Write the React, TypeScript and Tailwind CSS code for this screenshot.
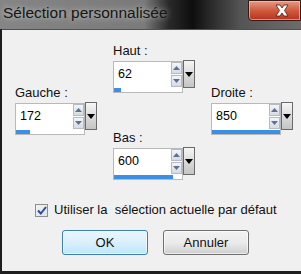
import React from "react";

const font = { fontFamily: '"Liberation Sans", Arial, sans-serif' };

type Field = { label: string; value: string; bar: number };

function SpinField({ label, value, bar }: Field) {
    return (
        <div className="flex flex-col">
            <div className="h-[17px] text-[13px] leading-[14px] text-[#111]">{label}</div>
            <div className="flex items-start">
                {/* value box */}
                <div className="w-[70px] h-[32px] border border-[#b9b9b9] bg-white flex flex-col">
                    <div className="flex h-[26px]">
                        <div className="flex-1 pl-[4px] pt-[5px] text-[12.5px] leading-[14px] text-black">{value}</div>
                        <div className="w-[11px] flex flex-col gap-[1px]">
                            <div className="h-[12px] border border-[#b5bac4] bg-gradient-to-b from-[#f3f5f8] to-[#d6dbe3] flex items-center justify-center">
                                <svg width="7" height="4" viewBox="0 0 7 4">
                                    <path d="M0 4 L3.5 0 L7 4 Z" fill="#5e7290" />
                                </svg>
                            </div>
                            <div className="h-[12px] border border-[#b5bac4] bg-gradient-to-b from-[#f3f5f8] to-[#d6dbe3] flex items-center justify-center">
                                <svg width="7" height="4" viewBox="0 0 7 4">
                                    <path d="M0 0 L7 0 L3.5 4 Z" fill="#5e7290" />
                                </svg>
                            </div>
                        </div>
                    </div>
                    <div className="mt-auto h-[4px] flex">
                        <div className="h-full bg-[#3c8fe2]" style={{ width: bar }} />
                    </div>
                </div>
                {/* dropdown button */}
                <div className="w-[12px] h-[28px] -mt-[1px] border border-[#6a6a6a] bg-gradient-to-b from-[#f6f6f6] via-[#dcdcdc] to-[#c4c4c4] flex items-center justify-center">
                    <svg width="8" height="5" viewBox="0 0 8 5">
                        <path d="M0 0 L8 0 L4 5 Z" fill="#000" />
                    </svg>
                </div>
            </div>
        </div>
    );
}

export default function App() {
    return (
        <div className="w-[301px] h-[274px] overflow-hidden bg-[#1e1e1e] flex flex-col" style={font}>
            {/* TITLE BAR */}
            <div className="h-[29px] flex items-start bg-[linear-gradient(90deg,#858585_0%,#7a7a7a_48%,#2a2a2a_56%,#0e0e0e_64%,#2a2a2a_70%,#555555_80%,#6c6c6c_100%)]">
                <div className="pl-[3px] pt-[5px] text-[15.5px] leading-[16px] text-[#161616] [text-shadow:0_0_6px_rgba(255,255,255,0.7)]">
                    Sélection personnalisée
                </div>
                <div className="ml-auto w-[53px] h-[21px] rounded-bl-[4px] border border-[#3a1a14] bg-gradient-to-b from-[#e49a88] via-[#cf5a3e] to-[#b8301a] shadow-[inset_0_0_0_1px_rgba(255,200,190,0.6)] flex items-center pl-[25px]">
                    <svg width="16" height="13" viewBox="0 0 16 13">
                        <path
                            d="M2 1 L6 1 L8 4 L10 1 L14 1 L10.5 6.5 L14 12 L10 12 L8 9 L6 12 L2 12 L5.5 6.5 Z"
                            fill="#fff"
                            stroke="#4a1a10"
                            strokeWidth="0.8"
                        />
                    </svg>
                </div>
            </div>

            {/* CLIENT AREA */}
            <div className="ml-[2px] h-[242px] bg-[#f0f0f0] border-t border-[#505050] flex flex-col">
                <div className="flex pl-[13px]">
                    <div className="w-[98px] shrink-0 pt-[56px]">
                        <SpinField label="Gauche :" value="172" bar={14} />
                    </div>
                    <div className="w-[98px] shrink-0 pt-[14px] flex flex-col gap-[38px]">
                        <SpinField label="Haut :" value="62" bar={7} />
                        <SpinField label="Bas :" value="600" bar={59} />
                    </div>
                    <div className="w-[90px] shrink-0 pt-[56px]">
                        <SpinField label="Droite :" value="850" bar={68} />
                    </div>
                </div>

                {/* CHECKBOX */}
                <div className="mt-[23px] pl-[33px] flex items-center gap-[6px]">
                    <div className="w-[13px] h-[13px] border border-[#8e8f8f] bg-gradient-to-br from-[#f2f2f2] to-[#e0e3e8] flex items-center justify-center">
                        <svg width="10" height="9" viewBox="0 0 10 9">
                            <path d="M1 4.5 L3.8 7.5 L9 1" fill="none" stroke="#2a4d94" strokeWidth="2" />
                        </svg>
                    </div>
                    <span className="text-[13px] leading-[14px] text-[#111] whitespace-pre">
                        Utiliser la  sélection actuelle par défaut
                    </span>
                </div>

                {/* BUTTONS */}
                <div className="mt-[13px] pl-[60px] flex gap-[15px]">
                    <button className="w-[86px] h-[25px] rounded-[3px] border border-[#3c7fb1] bg-gradient-to-b from-[#eaf6fd] via-[#d9f0fc] to-[#bee6fd] text-[13px] text-[#111] shadow-[inset_0_0_0_1px_rgba(255,255,255,0.6)]">
                        OK
                    </button>
                    <button className="w-[86px] h-[25px] rounded-[3px] border border-[#707070] bg-gradient-to-b from-[#f2f2f2] via-[#ebebeb] to-[#cfcfcf] text-[13px] text-[#111] shadow-[inset_0_0_0_1px_rgba(255,255,255,0.6)]">
                        Annuler
                    </button>
                </div>
            </div>
        </div>
    );
}
